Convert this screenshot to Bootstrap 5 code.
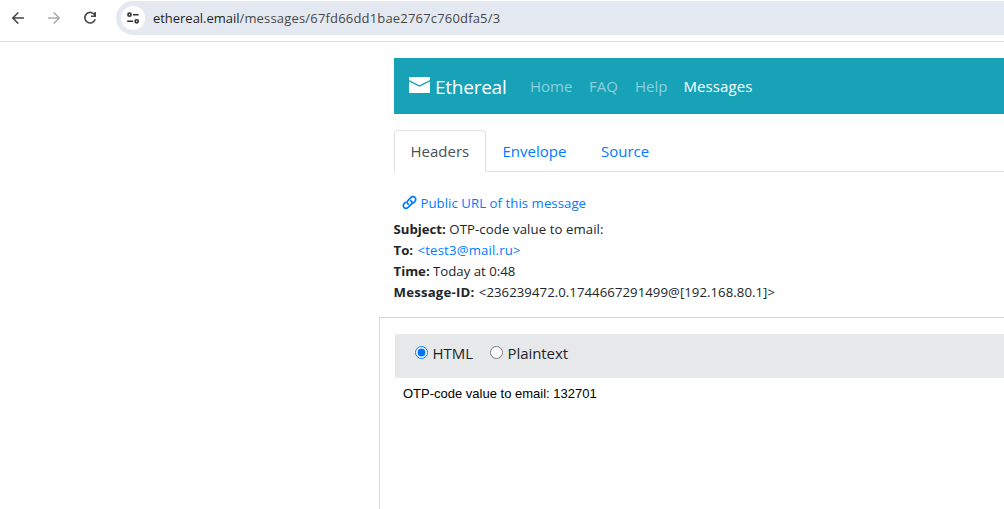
<!DOCTYPE html>
<html lang="en">
<head>
<meta charset="utf-8">
<title>Ethereal Email</title>
<link href="https://cdn.jsdelivr.net/npm/bootstrap@5.3.0/dist/css/bootstrap.min.css" rel="stylesheet">
<style>
  body { font-family: "Open Sans", "Noto Sans", sans-serif; font-size: 15px; line-height: 24px; color: #212529; background: #fff; height: 509px; overflow: hidden; }
  a { color: #007bff; text-decoration: none; }
  .browser-bar { height: 42px; border-bottom: 1px solid #dcdfe3; padding-left: 9px; }
  .browser-bar .tool { width: 18px; height: 18px; margin-right: 18px; }
  .omnibox { height: 34px; margin: 1px 0 0 -1px; border-radius: 17px 0 0 17px; background: #e4e9f1; padding-left: 5px; font-size: 13px; color: #474747; }
  .site-chip { width: 24px; height: 24px; margin-right: 8px; }
  .address { letter-spacing: .18px; }
  .address b { font-weight: 400; color: #1f1f1f; letter-spacing: -.03px; }
  .page { margin: 16px 0 0 394px; }
  .site-nav { height: 56px; background: #17a2b8; padding: 0 0 0 15px; }
  .site-nav .navbar-brand { color: #fff; font-size: 19px; letter-spacing: -.25px; line-height: 30px; width: 97px; margin-right: 16px; gap: 5px; padding: 2px 0 0; }
  .site-nav .nav-link { color: rgba(255,255,255,.5); padding: 8px; white-space: nowrap; }
  .site-nav .nav-link.active { color: #fff; letter-spacing: .1px; }
  .w-home { width: 59px; } .w-faq { width: 46px; } .w-help { width: 48.5px; }
  .msg-tabs { margin-top: 16px; height: 42px; border-bottom: 1px solid #dee2e6; }
  .msg-tabs .nav-link { padding: 8px 15.5px; height: 42px; border-radius: 4px 4px 0 0; color: #007bff; white-space: nowrap; }
  .msg-tabs .nav-link.active { color: #495057; border-color: #dee2e6 #dee2e6 #fff; width: 92px; }
  .w-env { width: 98.5px; }
  .details { font-size: 13.2px; line-height: 21px; }
  .details strong { margin-left: -.5px; }
  .public-link { height: 31px; margin-top: 16px; padding-left: 8px; gap: 3.5px; letter-spacing: .05px; }
  .subject-text { letter-spacing: .09px; }
  .to-text { letter-spacing: .17px; margin-left: 1px; }
  .id-label { letter-spacing: .2px; }
  .id-text { letter-spacing: .05px; margin-left: 1px; }
  .body-panel { margin: 14px 0 0 -15px; border: 1px solid #d5d5e5; border-width: 1px 0 0 1px; padding: 16px 0 0 15px; height: 200px; }
  .view-switch { height: 44px; background: #e6e8ea; padding: 7px 0 0 20px; }
  .view-switch input { width: 13px; height: 13px; margin: 5px 4.5px 0 0; accent-color: #0075ff; }
  .plain-label { letter-spacing: -.07px; }
  .html-body { font: 13px/15px "Liberation Sans", Arial, sans-serif; color: #000; padding: 8px; }
</style>
</head>
<body>
<header class="browser-bar d-flex align-items-start">
  <div class="d-flex" style="padding-top:9px">
    <svg class="tool" viewBox="0 0 18 18" fill="none" stroke="#474747" stroke-width="1.6"><path d="M15 9H4M9.3 3.5 3.8 9l5.5 5.5"/></svg>
    <svg class="tool" viewBox="0 0 18 18" fill="none" stroke="#ababab" stroke-width="1.6"><path d="M3 9h11M8.7 3.5 14.2 9l-5.5 5.5"/></svg>
    <svg class="tool" viewBox="0 0 18 18" fill="none" stroke="#474747" stroke-width="1.6"><path d="M13.8 6.1A5.3 5.3 0 1 0 14.2 10.3M14.2 3v4.2H10"/></svg>
  </div>
  <div class="omnibox d-flex align-items-center flex-grow-1">
    <div class="site-chip rounded-circle bg-white d-flex align-items-center justify-content-center">
      <svg width="14" height="14" viewBox="0 0 14 14" fill="none" stroke="#303030" stroke-width="1.6"><circle cx="3.5" cy="3.7" r="1.6"/><path d="M7 3.7h5.6M1.2 10.3H7"/><circle cx="10.7" cy="10.3" r="1.6"/></svg>
    </div>
    <span class="address"><b>ethereal.email</b>/messages/67fd66dd1bae2767c760dfa5/3</span>
  </div>
</header>

<main class="page">
  <nav class="site-nav navbar navbar-expand d-flex flex-nowrap justify-content-start">
    <a class="navbar-brand d-flex align-items-center" href="#">
      <svg class="flex-shrink-0" width="21" height="16" viewBox="0 0 21 16" style="margin-top:-4px" fill="#fff"><path d="M0 0h21v3L10.5 8.300 0 3z"/><path d="M0 4.500 10.500 9.800 21 4.500V16H0z"/></svg>
      <span class="brand-text">Ethereal</span>
    </a>
    <div class="navbar-nav">
      <a class="nav-link w-home" href="#">Home</a>
      <a class="nav-link w-faq" href="#">FAQ</a>
      <a class="nav-link w-help" href="#">Help</a>
      <a class="nav-link active" href="#">Messages</a>
    </div>
  </nav>

  <ul class="msg-tabs nav nav-tabs flex-nowrap">
    <li class="nav-item"><a class="nav-link active" href="#">Headers</a></li>
    <li class="nav-item"><a class="nav-link w-env" href="#">Envelope</a></li>
    <li class="nav-item"><a class="nav-link" href="#">Source</a></li>
  </ul>

  <section class="details">
    <a class="public-link d-flex align-items-center" href="#">
      <svg width="15" height="15" viewBox="0 0 15 15" fill="none" stroke="#007bff" stroke-width="1.7" stroke-linecap="round" style="margin-top:-2px"><path d="M6.300 9.100C4.900 8.600 4.700 6.900 5.700 5.800L8.300 3.200C9.700 1.500 11.700 1.200 12.900 2.300S13.900 5.300 12.700 6.600L10.800 8.400"/><path d="M8.700 5.900C10.100 6.400 10.300 8.100 9.300 9.200L6.700 11.800C5.300 13.500 3.300 13.800 2.100 12.700S1.100 9.700 2.300 8.400L3.400 7.300"/></svg>
      <span>Public URL of this message</span>
    </a>
    <div><strong>Subject:</strong> <span class="subject-text">OTP-code value to email:</span></div>
    <div><strong>To:</strong> <a class="to-text" href="#">&lt;test3@mail.ru&gt;</a></div>
    <div><strong>Time:</strong> <span>Today at 0:48</span></div>
    <div><strong class="id-label">Message-ID:</strong> <span class="id-text">&lt;236239472.0.1744667291499@[192.168.80.1]&gt;</span></div>
  </section>

  <section class="body-panel">
    <div class="view-switch d-flex align-items-start">
      <label class="d-flex align-items-start" style="width:75px"><input type="radio" name="view" checked>HTML</label>
      <label class="d-flex align-items-start plain-label"><input type="radio" name="view">Plaintext</label>
    </div>
    <div class="html-body">OTP-code value to email: 132701</div>
  </section>
</main>
<script src="https://cdn.jsdelivr.net/npm/bootstrap@5.3.0/dist/js/bootstrap.bundle.min.js"></script>
</body>
</html>
